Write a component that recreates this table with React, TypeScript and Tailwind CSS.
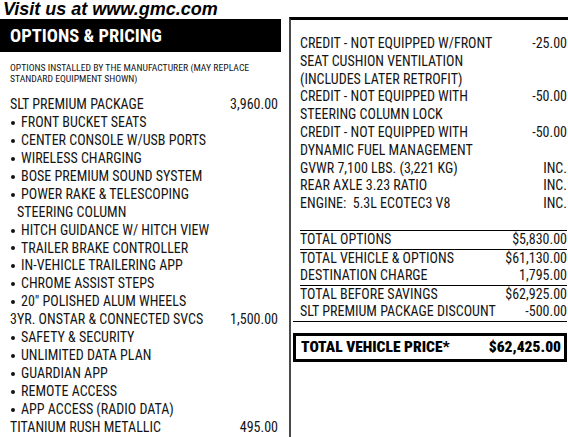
import React from "react";

type Row = { t: string; p?: string; b?: boolean; i?: boolean };

const leftRows: Row[] = [
  { t: "SLT PREMIUM PACKAGE", p: "3,960.00" },
  { t: "FRONT BUCKET SEATS", b: true },
  { t: "CENTER CONSOLE W/USB PORTS", b: true },
  { t: "WIRELESS CHARGING", b: true },
  { t: "BOSE PREMIUM SOUND SYSTEM", b: true },
  { t: "POWER RAKE & TELESCOPING", b: true },
  { t: "STEERING COLUMN", i: true },
  { t: "HITCH GUIDANCE W/ HITCH VIEW", b: true },
  { t: "TRAILER BRAKE CONTROLLER", b: true },
  { t: "IN-VEHICLE TRAILERING APP", b: true },
  { t: "CHROME ASSIST STEPS", b: true },
  { t: "20\" POLISHED ALUM WHEELS", b: true },
  { t: "3YR. ONSTAR & CONNECTED SVCS", p: "1,500.00" },
  { t: "SAFETY & SECURITY", b: true },
  { t: "UNLIMITED DATA PLAN", b: true },
  { t: "GUARDIAN APP", b: true },
  { t: "REMOTE ACCESS", b: true },
  { t: "APP ACCESS (RADIO DATA)", b: true },
  { t: "TITANIUM RUSH METALLIC", p: "495.00" },
];

const rightRows: Row[] = [
  { t: "CREDIT - NOT EQUIPPED W/FRONT", p: "-25.00" },
  { t: "SEAT CUSHION VENTILATION" },
  { t: "(INCLUDES LATER RETROFIT)" },
  { t: "CREDIT - NOT EQUIPPED WITH", p: "-50.00" },
  { t: "STEERING COLUMN LOCK" },
  { t: "CREDIT - NOT EQUIPPED WITH", p: "-50.00" },
  { t: "DYNAMIC FUEL MANAGEMENT" },
  { t: "GVWR 7,100 LBS. (3,221 KG)", p: "INC." },
  { t: "REAR AXLE 3.23 RATIO", p: "INC." },
  { t: "ENGINE:\u00a0\u00a05.3L ECOTEC3 V8", p: "INC." },
];

export default function App() {
  return (
    <div className="w-[568px] h-[437px] overflow-hidden bg-white flex text-[#141414] font-['Roboto',sans-serif] [font-stretch:75%]">
      <div className="w-[281px] shrink-0 flex flex-col">
        <div className="h-[19px] pl-[3px] whitespace-nowrap font-['Liberation_Sans',Arial,sans-serif] [font-stretch:100%] font-bold italic text-[18px] leading-[19px] text-black">
          Visit us at www.gmc.com
        </div>
        <div className="h-[33px] bg-black text-white font-bold text-[18.5px] pl-[10px] pt-[2px] flex items-center whitespace-nowrap">
          OPTIONS &amp; PRICING
        </div>
        <div className="pl-[10px] pr-[3px] pt-[10px] text-[9.7px] leading-[11px] whitespace-nowrap">
          OPTIONS INSTALLED BY THE MANUFACTURER (MAY REPLACE
          <br />
          STANDARD EQUIPMENT SHOWN)
        </div>
        <div className="mt-[12px] pl-[10px] pr-[3px] text-[14px] leading-[17.94px]">
          {leftRows.map((r, k) => (
            <div key={k} className="flex justify-between whitespace-nowrap">
              <div className="flex items-center">
                {r.b && (
                  <span className="w-[11px] pl-[1px] flex items-center">
                    <span className="block w-[4px] h-[4px] rounded-full bg-[#141414]" />
                  </span>
                )}
                {r.i && <span className="w-[7px]" />}
                <span>{r.t}</span>
              </div>
              {r.p && <span>{r.p}</span>}
            </div>
          ))}
        </div>
      </div>
      <div className="ml-[8px] mt-[17px] flex-1 border-l-2 border-t-[3px] border-l-[#4a4a4a] border-t-black pl-[9px] pr-[1px] pt-[15px] text-[14px] flex flex-col">
        <div className="leading-[17.8px]">
          {rightRows.map((r, k) => (
            <div key={k} className="flex justify-between whitespace-nowrap">
              <span>{r.t}</span>
              {r.p && <span>{r.p}</span>}
            </div>
          ))}
        </div>
        <div className="mt-[17px] border-t border-black leading-[17.5px]">
          <div className="h-[19px] flex justify-between items-center border-b border-black">
            <span>TOTAL OPTIONS</span>
            <span>$5,830.00</span>
          </div>
          <div className="flex justify-between">
            <span>TOTAL VEHICLE &amp; OPTIONS</span>
            <span>$61,130.00</span>
          </div>
          <div className="flex justify-between border-b border-black">
            <span>DESTINATION CHARGE</span>
            <span>1,795.00</span>
          </div>
          <div className="flex justify-between">
            <span>TOTAL BEFORE SAVINGS</span>
            <span>$62,925.00</span>
          </div>
          <div className="flex justify-between">
            <span>SLT PREMIUM PACKAGE DISCOUNT</span>
            <span>-500.00</span>
          </div>
        </div>
        <div className="-ml-[7px] h-px bg-black" />
        <div className="-ml-[7px] mt-[11px] h-[29px] border-[3px] border-black flex justify-between items-center pl-[5px] pr-[3px] font-black text-[15.5px] text-black whitespace-nowrap">
          <span>TOTAL VEHICLE PRICE*</span>
          <span>$62,425.00</span>
        </div>
      </div>
    </div>
  );
}
